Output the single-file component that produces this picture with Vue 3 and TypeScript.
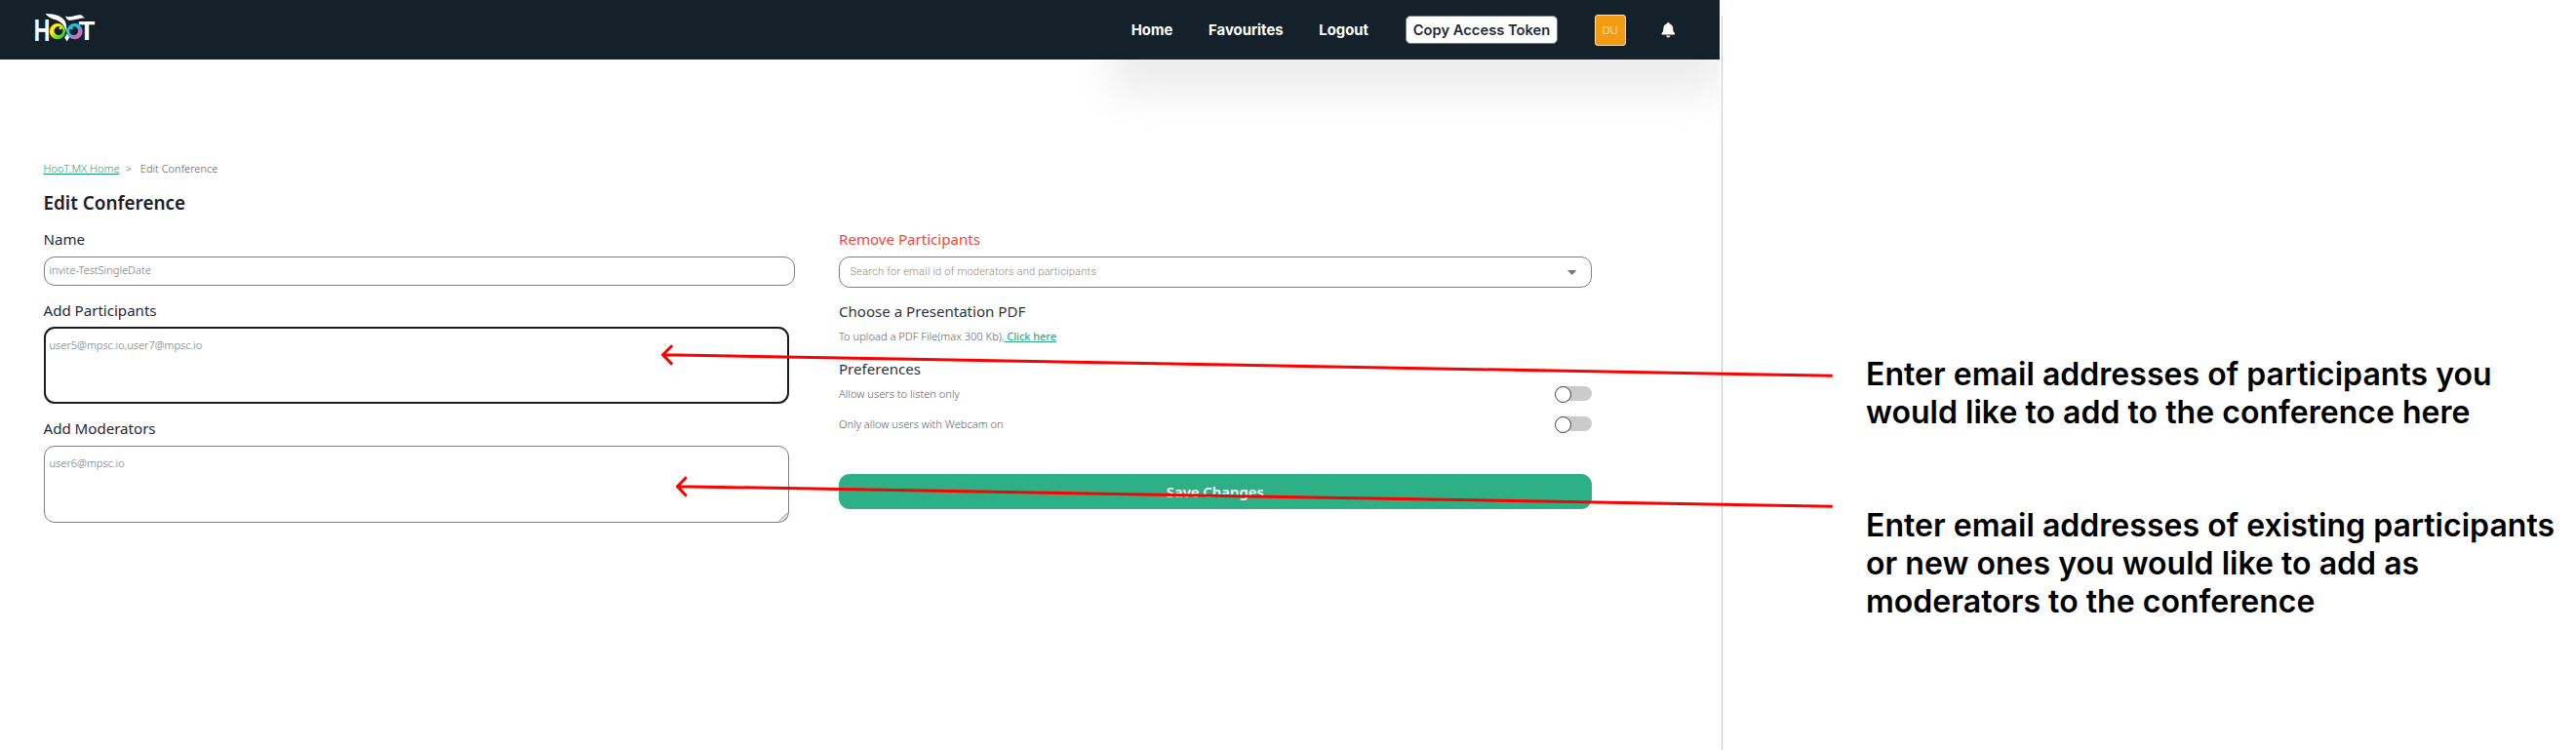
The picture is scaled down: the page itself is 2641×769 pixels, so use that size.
<script setup lang="ts">
import { ref } from 'vue'

interface Preference {
  label: string
  enabled: boolean
}

const navLinks: string[] = ['Home', 'Favourites', 'Logout']
const conferenceName = ref('invite-TestSingleDate')
const participants = ref('user5@mpsc.io,user7@mpsc.io')
const moderators = ref('user6@mpsc.io')
const preferences = ref<Preference[]>([
  { label: 'Allow users to listen only', enabled: false },
  { label: 'Only allow users with Webcam on', enabled: false },
])
const notes: string[][] = [
  ['Enter email addresses of participants you', 'would like to add to the conference here'],
  [
    'Enter email addresses of existing participants',
    'or new ones you would like to add as',
    'moderators to the conference',
  ],
]
</script>

<template>
  <div class="board">
    <div class="app">
      <header class="bar">
        <svg class="logo" width="68" height="46" viewBox="34 6 68 46" aria-label="HooT">
          <defs>
            <linearGradient id="eyeL" x1="0" y1="0" x2="1" y2="1">
              <stop offset="0.35" stop-color="#fff200" />
              <stop offset="0.8" stop-color="#2fd62f" />
            </linearGradient>
            <linearGradient id="eyeR" x1="0" y1="0" x2="1" y2="1">
              <stop offset="0.35" stop-color="#12cfe4" />
              <stop offset="0.8" stop-color="#f05ab4" />
            </linearGradient>
          </defs>
          <text class="logo-letter" x="34.8" y="41.5" font-size="30" textLength="16.5" lengthAdjust="spacingAndGlyphs">H</text>
          <circle cx="58.9" cy="32.2" r="8.1" fill="url(#eyeL)" />
          <circle cx="76.6" cy="32.2" r="8.1" fill="url(#eyeR)" />
          <text class="logo-letter" x="80" y="41" font-size="25.5" textLength="18" lengthAdjust="spacingAndGlyphs">T</text>
          <circle cx="60" cy="31.6" r="4.5" fill="#15212a" />
          <circle cx="75.6" cy="31.6" r="4.5" fill="#15212a" />
          <circle cx="62" cy="28.8" r="1.5" fill="#fff200" />
          <circle cx="73.4" cy="28.8" r="1.5" fill="#12c9e0" />
          <path d="M46.5 14 C55 13.8 66 16.5 67.6 24 C68.3 28 68.6 31 68.6 34 C66.5 27.5 64.5 23.5 58 20.6 C52.5 19.3 49 17.5 46.5 14 Z" fill="#fff" />
          <path d="M67 16.5 C71 19 79 14.5 83 15.2 C84.5 16 85.5 17.5 87.3 18.3 C82 18.6 75 20.9 71 21 C68.8 20.3 67.7 18.5 67 16.5 Z" fill="#fff" />
          <path d="M68.6 34.5 L71.1 38.5 L68.6 42.6 L66.2 38.5 Z" fill="#fff" />
        </svg>
        <nav class="nav">
          <a v-for="link in navLinks" :key="link" class="nav-link">{{ link }}</a>
        </nav>
        <button class="token" type="button">Copy Access Token</button>
        <span class="avatar">DU</span>
        <svg class="bell" width="15" height="16" viewBox="0 0 15 16">
          <path d="M7.3 0C8 0 8.5.5 8.5 1.2 10.9 1.8 12.2 3.6 12.2 6.1 12.2 9 12.9 10 13.9 11 14.4 11.5 14.2 12.6 13.3 12.6H1.3C.4 12.6.2 11.5.7 11 1.7 10 2.4 9 2.4 6.1 2.4 3.6 3.7 1.8 6.1 1.2 6.1.5 6.6 0 7.3 0ZM5.3 13.5H9.3C9.3 14.6 8.5 15.4 7.3 15.4S5.3 14.6 5.3 13.5Z" fill="#fff" />
        </svg>
      </header>
      <div class="haze"><div class="haze-shape"></div></div>

      <main class="content">
        <div class="crumbs"><a class="crumb-link">HooT.MX Home</a><span class="sep">&gt;</span><span>Edit Conference</span></div>
        <h1 class="title">Edit Conference</h1>
        <div class="columns">
          <section class="col">
            <div class="label">Name</div>
            <div class="field input">{{ conferenceName }}</div>
            <div class="label label-participants">Add Participants</div>
            <div class="field area focused">{{ participants }}</div>
            <div class="label label-moderators">Add Moderators</div>
            <div class="field area">
              {{ moderators }}
              <svg class="grip" width="10" height="10" viewBox="0 0 10 10">
                <path d="M1 9.5L9.5 1M4.5 9.5L9.5 4.5" stroke="#777" stroke-width="1" fill="none" />
              </svg>
            </div>
          </section>

          <section class="col">
            <div class="label danger">Remove Participants</div>
            <div class="field select">
              <span>Search for email id of moderators and participants</span>
              <svg width="10" height="5" viewBox="0 0 10 5"><path d="M0 0H9.4L4.7 5Z" fill="#757575" /></svg>
            </div>
            <div class="label slate label-pdf">Choose a Presentation PDF</div>
            <div class="small upload">To upload a PDF File(max 300 Kb),<a class="click">&nbsp;Click here</a></div>
            <div class="label slate label-prefs">Preferences</div>
            <div class="prefs">
              <div v-for="pref in preferences" :key="pref.label" class="pref">
                <span class="small">{{ pref.label }}</span>
                <span class="switch" :class="{ on: pref.enabled }"><i class="knob"></i></span>
              </div>
            </div>
            <button class="save" type="button">Save Changes</button>
          </section>
        </div>
      </main>
    </div>

    <aside class="notes">
      <p v-for="(note, n) in notes" :key="n" class="note">
        <span v-for="line in note" :key="line" class="note-line">{{ line }}</span>
      </p>
    </aside>

    <svg class="arrows" width="2641" height="769" viewBox="0 0 2641 769">
      <path d="M1878.8 385.2L679.5 363.8M689.2 354.2L679.5 363.8L689.2 373.6" />
      <path d="M1878.8 519.2L694.5 498.7M703.8 489.2L694.5 498.7L703.8 508.6" />
    </svg>
  </div>
</template>

<style>
body {
  margin: 0;
  background: #fff;
}
</style>

<style scoped>
.board {
  position: relative;
  display: flex;
  width: 2641px;
  height: 769px;
  overflow: hidden;
  background: #fff;
  font-family: 'Noto Sans', sans-serif;
}
.app {
  position: relative;
  flex: none;
  width: 1766px;
  height: 769px;
  box-sizing: border-box;
  background: linear-gradient(#c8c8c8, #c8c8c8) 1765px 16px / 1px 753px no-repeat;
}
.bar {
  display: flex;
  align-items: center;
  width: 1763px;
  height: 61px;
  box-sizing: border-box;
  padding: 0 45px 0 34px;
  background: #15212a;
  font-family: Inter, sans-serif;
}
.logo {
  display: block;
  margin-top: -3px;
  overflow: visible;
}
.logo-letter {
  font-family: Inter, sans-serif;
  font-weight: 700;
  fill: #fff;
}
.nav {
  display: flex;
  gap: 36.8px;
  margin-left: auto;
}
.nav-link {
  color: #fff;
  font-size: 14.85px;
  font-weight: 700;
  line-height: 20px;
}
.token {
  width: 156px;
  height: 29px;
  margin: 0 0 0 38px;
  padding: 0;
  border: 1px solid #767b7f;
  border-radius: 5px;
  background: #fff;
  color: #212b36;
  font: 600 14.72px/26px Inter, sans-serif;
  white-space: nowrap;
}
.avatar {
  width: 32px;
  height: 32px;
  margin: 1px 0 0 37.5px;
  box-sizing: border-box;
  border: 1px solid #fbe3bd;
  border-radius: 3px;
  background: #f39c12;
  color: #fff;
  font: 300 11.3px/30px 'Noto Sans', sans-serif;
  text-align: center;
}
.bell {
  margin-left: 36.5px;
}
.haze {
  position: absolute;
  top: 61px;
  left: 1000px;
  width: 763px;
  height: 120px;
  overflow: hidden;
}
.haze-shape {
  width: 626px;
  height: 96px;
  margin: -61px 0 0 140px;
  background: #ececec;
  filter: blur(20px);
}
.content {
  padding: 104px 0 0 44.5px;
}
.crumbs {
  color: #5a5a5a;
  font-size: 11.05px;
  font-weight: 300;
  line-height: 16px;
}
.crumb-link {
  color: #1f9e75;
  text-decoration: underline;
}
.sep {
  margin: 0 9px 0 6px;
}
.title {
  margin: 14px 0;
  color: #1a202c;
  font-size: 18.9px;
  font-weight: 600;
  line-height: 26px;
}
.columns {
  display: grid;
  grid-template-columns: 770.5px 771.5px;
  column-gap: 45px;
}
.label {
  color: #252838;
  font-size: 15.08px;
  font-weight: 400;
  line-height: 20px;
}
.label-participants {
  margin-top: 15px;
}
.label-moderators {
  margin-top: 15px;
}
.slate {
  color: #2e343f;
}
.danger {
  color: #ee4840;
}
.field {
  box-sizing: border-box;
  border: 1px solid #808080;
  border-radius: 11px;
  background: #fff;
  color: #757575;
  font-size: 11.07px;
  font-weight: 300;
  line-height: 16px;
}
.input {
  height: 30px;
  margin-top: 8px;
  padding: 5px 5px;
}
.area {
  position: relative;
  width: 764px;
  height: 79px;
  margin-top: 7px;
  padding: 9.5px 5px;
}
.label-moderators + .area {
  margin-top: 7.5px;
}
.focused {
  padding: 8.5px 4px;
  border: 2px solid #1c1c1c;
}
.grip {
  position: absolute;
  right: 0;
  bottom: 0;
}
.select {
  display: flex;
  align-items: center;
  justify-content: space-between;
  height: 32px;
  margin-top: 8px;
  padding: 0 13.5px 0 10.5px;
  color: #8c8c8c;
  font-family: Roboto, sans-serif;
  font-size: 11.1px;
  letter-spacing: 0.175px;
}
.label-pdf {
  margin-top: 14px;
}
.small {
  color: #5c6066;
  font-size: 11.12px;
  font-weight: 300;
  line-height: 16px;
}
.upload {
  margin-top: 7.5px;
}
.click {
  color: #2eb086;
  font-size: 11px;
  font-weight: 500;
  letter-spacing: -0.05px;
  text-decoration: underline;
}
.label-prefs {
  margin-top: 15.5px;
}
.prefs {
  display: flex;
  flex-direction: column;
  gap: 14.6px;
  margin-top: 8px;
}
.pref {
  display: flex;
  justify-content: space-between;
  height: 16px;
}
.switch {
  width: 37px;
  height: 15px;
  border-radius: 8px;
  background: #cbcbcb;
}
.knob {
  display: block;
  width: 17px;
  height: 17px;
  margin-left: -0.5px;
  box-sizing: border-box;
  border: 1.5px solid #3c3c3c;
  border-radius: 50%;
  background: #fff;
}
.switch.on .knob {
  margin-left: 20px;
}
.save {
  display: block;
  width: 100%;
  height: 36px;
  margin-top: 43px;
  padding: 0;
  border: 0;
  border-radius: 11px;
  background: #2eb086;
  color: #fff;
  font: 600 14.85px/36px 'Noto Sans', sans-serif;
}
.notes {
  display: flex;
  flex-direction: column;
  gap: 77px;
  padding: 364px 0 0 147px;
}
.note {
  margin: 0;
  color: #000;
  font: 600 32px/39px Inter, sans-serif;
  letter-spacing: 0.03px;
}
.note-line {
  display: block;
  white-space: nowrap;
}
.arrows {
  position: absolute;
  top: 0;
  left: 0;
  fill: none;
  stroke: #fe0000;
  stroke-width: 3;
  stroke-linecap: butt;
  stroke-linejoin: round;
}
</style>
